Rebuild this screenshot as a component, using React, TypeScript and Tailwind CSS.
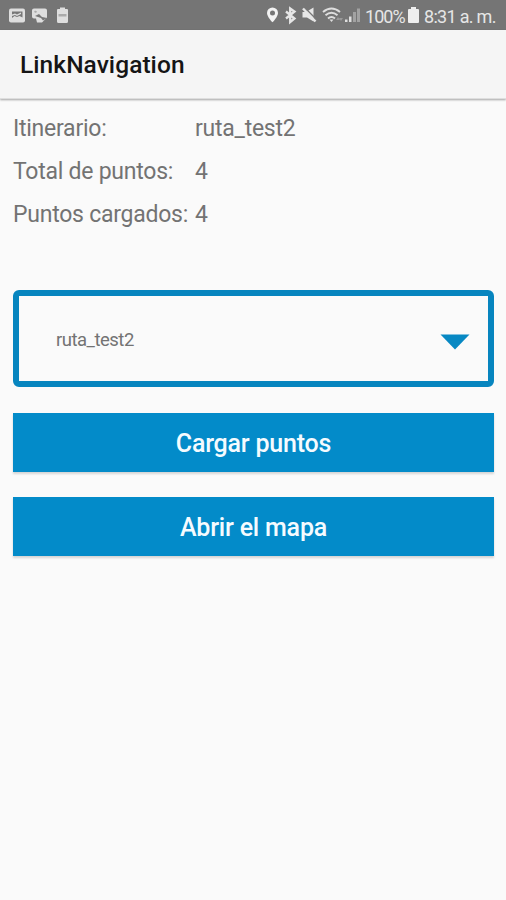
import React from "react";

const details = [
  { label: "Itinerario:", value: "ruta_test2" },
  { label: "Total de puntos:", value: "4" },
  { label: "Puntos cargados:", value: "4" },
];

function NotificationIcons() {
  return (
    <svg width="62" height="18" viewBox="0 0 62 18" className="mt-0.5 shrink-0">
      <rect x="1" y="1.500" width="16" height="14" rx="2" fill="#dedede" />
      <path d="M4 4.500h10.500v6l-3-1.500-2.500 1-2.500-1L4 11z" fill="#777" />
      <path d="M4 7.500l3-1 2 1 4-2V7L9 9 7 8l-3 1z" fill="#dedede" />
      <path d="M26 1.500h11a2 2 0 0 1 2 2v7l-5 5h-5l-1-4h-2a2 2 0 0 1-2-2v-6a2 2 0 0 1 2-2z" fill="#dedede" />
      <path d="M27 9l4-2 3 3 5 1-4 2.500-2-2.500-3-1z" fill="#777" />
      <path d="M27 3.500l2 1-1 1.500-2-1z" fill="#aaa" />
      <path d="M50 2h2V.5h5V2h2a1 1 0 0 1 1 1v11.500a1.500 1.500 0 0 1-1.500 1.500h-8a1.500 1.500 0 0 1-1.500-1.500V3a1 1 0 0 1 1-1z" fill="#dedede" />
      <path d="M50.500 7h8v2.500h-8z" fill="#aaa" />
    </svg>
  );
}

function SystemIcons() {
  return (
    <svg width="98" height="20" viewBox="266 6 98 20" className="shrink-0">
      <path fillRule="evenodd" d="M272.500 8.500a5.500 5.500 0 0 0-5.500 5.500c0 3.900 5.500 9.300 5.500 9.300s5.500-5.400 5.500-9.300a5.500 5.500 0 0 0-5.500-5.500zm0 3a2.500 2.500 0 1 1 0 5 2.500 2.500 0 0 1 0-5z" fill="#f2f2f2" />
      <path d="M286 12.500l8.500 7-4.300 3.500V9.500l4.300 3-8.500 7" fill="none" stroke="#e6e6e6" strokeWidth="2.300" />
      <path d="M302.500 13h3.500l7.500-4.500v14L307 18.500h-4.500z" fill="#e6e6e6" />
      <path d="M305 9l12 12" stroke="#777" strokeWidth="1.500" />
      <path d="M303 9.500l12.500 13" stroke="#e6e6e6" strokeWidth="2.500" />
      <g fill="none" stroke="#dedede" strokeWidth="2">
        <path d="M323 13q8.500-7 17 0" />
        <path d="M325.500 16.300q6-5 12 0" />
        <path d="M328 19.500q3.500-3 7 0" />
      </g>
      <path d="M329.500 20.500h4l-2 2.500z" fill="#dedede" />
      <path d="M336 21l2-3 2 3zM339 19h4l-2 3z" fill="#999" />
      <path d="M345 20.500h2.500V23H345zM349 17.500h2.500V23H349z" fill="#dedede" />
      <path d="M353 13h3v10h-3zM357 9.500h3V23h-3z" fill="#a2a2a2" />
    </svg>
  );
}

function ActionButton({ children }: { children: React.ReactNode }) {
  return (
    <button className="h-[59px] w-full bg-[#038bc9] pt-px text-center text-[25px] font-medium leading-none tracking-[-0.2px] text-[#f5fbff] shadow-[0_2px_2px_rgba(0,0,0,0.15)]">
      {children}
    </button>
  );
}

export default function App() {
  return (
    <div className="h-[900px] w-[506px] overflow-hidden bg-[#fafafa] font-['Roboto',sans-serif]">
      <header className="flex h-[30px] items-center bg-[#757575] pl-2 pr-[9px] text-[#e6e6e6]">
        <NotificationIcons />
        <div className="ml-auto flex items-center">
          <SystemIcons />
          <span className="ml-px w-[41px] whitespace-nowrap pt-[3px] text-[18px] leading-5 tracking-[-0.95px]">100%</span>
          <svg width="11" height="16" viewBox="0 0 11 16" className="ml-[2px] mr-[5px] shrink-0">
            <path d="M3 0h5v2h2a1 1 0 0 1 1 1v12a1 1 0 0 1-1 1H1a1 1 0 0 1-1-1V3a1 1 0 0 1 1-1h2z" fill="#eee" />
          </svg>
          <span className="w-[73px] whitespace-nowrap pt-[3px] text-[18px] leading-5 tracking-[-0.7px]">8:31 a. m.</span>
        </div>
      </header>
      <div className="flex h-[69px] items-center border-b border-[#dedede] bg-[#f5f5f5] pl-5 pt-[3px] shadow-[0_1px_2px_rgba(0,0,0,0.35)]">
        <h1 className="text-[24.5px] font-medium leading-none tracking-[0.06px] text-[#151515]">LinkNavigation</h1>
      </div>
      <main className="px-[13px] pt-[9px]">
        <dl className="text-[23px] tracking-[-0.25px] text-[#737373]">
          {details.map(({ label, value }) => (
            <div key={label} className="flex h-[43px] items-center whitespace-nowrap">
              <dt className="w-[182px]">{label}</dt>
              <dd>{value}</dd>
            </div>
          ))}
        </dl>
        <div className="mt-[53px] flex h-[97px] w-[481px] items-center justify-between rounded-[6px] border-[6px] border-[#0785bf] pl-[37px] pr-[18px]">
          <span className="pt-[5px] text-[18.5px] tracking-[-0.5px] text-[#737373]">ruta_test2</span>
          <svg width="30" height="16" viewBox="0 0 30 16" className="mt-1.5">
            <path d="M0.500 0.500h29L15 15.500z" fill="#0788c3" />
          </svg>
        </div>
        <div className="mt-[26px] flex w-[481px] flex-col gap-[25px]">
          <ActionButton>Cargar puntos</ActionButton>
          <ActionButton>Abrir el mapa</ActionButton>
        </div>
      </main>
    </div>
  );
}
